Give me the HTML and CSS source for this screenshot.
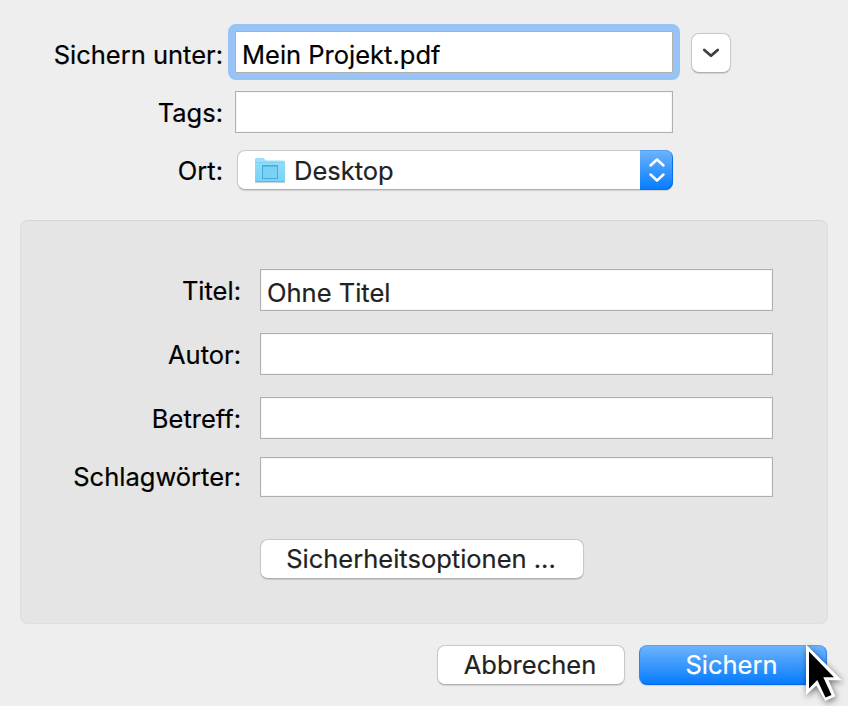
FILE: index.html
```html
<!DOCTYPE html>
<html lang="de">
<head>
    <meta charset="UTF-8">
    <meta name="viewport" content="width=device-width, initial-scale=1.0">

    <title>Sichern</title>

    <link rel="stylesheet" href="styles.css">
</head>
<body>

    <form class="dialog">
        <!-- File name, tags and location -->
        <div class="file-fields">
            <div class="row row-name">
                <label for="filename">Sichern unter:</label>
                <input id="filename" class="field focused" type="text" value="Mein Projekt.pdf">
                <button type="button" class="btn expand" aria-label="Erweitern">
                    <svg width="18" height="12" viewBox="0 0 18 12">
                        <path d="M2.3 3 L9 8.8 L15.7 3" fill="none" stroke="#404040" stroke-width="2.8" stroke-linecap="round" stroke-linejoin="round"/>
                    </svg>
                </button>
            </div>
            <div class="row row-tags">
                <label for="tags">Tags:</label>
                <input id="tags" class="field" type="text">
            </div>
            <div class="row row-place">
                <label>Ort:</label>
                <div class="select">
                    <svg class="folder" width="32" height="28" viewBox="0 0 32 28">
                        <defs>
                            <linearGradient id="folder-front" x1="0" y1="0" x2="0" y2="1">
                                <stop offset="0" stop-color="#8ddcfb"/>
                                <stop offset="1" stop-color="#78d2f9"/>
                            </linearGradient>
                        </defs>
                        <path d="M1 26.5 H31" stroke="#c9cfd2" stroke-width="1.2"/>
                        <path d="M1 24.5 V3.5 Q1 2 2.5 2 H9.5 L12 4.5 H29.5 Q31 4.5 31 6 V24.5 Z" fill="#9be0fb"/>
                        <path d="M1 7 H31 V24.5 Q31 25.8 30 25.8 H2 Q1 25.8 1 24.5 Z" fill="url(#folder-front)"/>
                        <path d="M1 6.5 H31" stroke="#83d0ef" stroke-width="1"/>
                        <path d="M1.5 25.5 H30.5" stroke="#5bbbe5" stroke-width="1"/>
                        <rect x="8.5" y="9.5" width="15" height="13" fill="#7ad1f5" stroke="#48acd9"/>
                        <path d="M8 9.8 H24" stroke="#48acd9" stroke-width="1.6"/>
                    </svg>
                    <span class="select-value">Desktop</span>
                    <span class="stepper">
                        <svg width="18" height="26" viewBox="0 0 18 26">
                            <path d="M2.5 8.5 L9 2.5 L15.5 8.5 M2.5 17.5 L9 23.5 L15.5 17.5" fill="none" stroke="#fff" stroke-width="2.5" stroke-linecap="round" stroke-linejoin="round"/>
                        </svg>
                    </span>
                </div>
            </div>
        </div>

        <!-- PDF metadata -->
        <div class="panel">
            <div class="row">
                <label for="title">Titel:</label>
                <input id="title" class="field" type="text" value="Ohne Titel">
            </div>
            <div class="row">
                <label for="author">Autor:</label>
                <input id="author" class="field" type="text">
            </div>
            <div class="row">
                <label for="subject">Betreff:</label>
                <input id="subject" class="field" type="text">
            </div>
            <div class="row row-keywords">
                <label for="keywords">Schlagwörter:</label>
                <input id="keywords" class="field" type="text">
            </div>
            <button type="button" class="btn security">Sicherheitsoptionen ...</button>
        </div>

        <div class="actions">
            <button type="button" class="btn cancel">Abbrechen</button>
            <button type="button" class="btn primary">Sichern</button>
        </div>

        <svg class="cursor" width="48" height="68" viewBox="0 0 48 68">
            <path d="M7 7.5 V58 L17.3 48.5 L26.3 64 L36.5 59.3 L29.5 43.3 H43 Z" fill="#fff"/>
            <path d="M10 14.5 V51.5 L18.3 43 L26.5 60.5 L32.5 58 L24.3 40.3 H35 Z" fill="#000"/>
        </svg>
    </form>

</body>
</html>
```

FILE: styles.css
```css
* {
    box-sizing: border-box;
}
body {
    margin: 0;
    background: #eeeeee;
    color: #000;
    font-family: Inter, "Liberation Sans", sans-serif;
    font-size: 25.5px;
    font-variant-ligatures: none;
    -webkit-text-stroke: 0.2px;
}
.dialog {
    position: relative;
    width: 848px;
    height: 706px;
    padding: 31px 20px 0;
    overflow: hidden;
}
.file-fields {
    height: 189px;
}
.row {
    display: flex;
    align-items: center;
}
label {
    flex: none;
    width: 203px;
    margin-right: 12px;
    padding-top: 2px;
    text-align: right;
    white-space: nowrap;
    line-height: 32px;
}
.field {
    width: 438px;
    height: 42px;
    margin: 0;
    padding: 5px 6px 0;
    border: 1px solid #b0b0b0;
    border-radius: 0;
    background: #fff;
    box-shadow: inset 0 0 0 1px #f5f5f5;
    color: #000;
    font: inherit;
    outline: none;
}
/* Focus ring around the active field */
.focused {
    box-shadow: 0 0 0 1px #98c4f5;
    outline: 7px solid #98c4f5;
    outline-offset: 0;
    border-radius: 1px;
}
.row-name {
    margin-bottom: 18px;
}
.row-name label {
    padding-top: 6px;
}
.row-tags {
    margin-bottom: 17px;
}
.btn {
    display: flex;
    align-items: center;
    justify-content: center;
    height: 40px;
    margin: 0;
    padding: 0 0 2px;
    border: 1px solid #c8c8c8;
    border-bottom-color: #b0b0b0;
    border-radius: 8px;
    background: #fff;
    box-shadow: 0 1px 1px rgba(0, 0, 0, 0.12);
    color: #222;
    font: inherit;
    white-space: nowrap;
}
.expand {
    width: 40px;
    margin: 2px 0 0 18px;
    padding: 0;
}
.select {
    display: flex;
    align-items: center;
    width: 436px;
    height: 40px;
    margin-left: 2px;
    padding-left: 16px;
    border: 1px solid #c8c8c8;
    border-bottom-color: #b0b0b0;
    border-right: 0;
    border-radius: 8px;
    box-shadow: 0 1px 1px rgba(0, 0, 0, 0.12);
    background: #fff;
    color: #222;
}
.select-value {
    margin-left: 8px;
}
.stepper {
    display: flex;
    align-items: center;
    justify-content: center;
    width: 33px;
    height: 40px;
    margin: -1px 0 -1px auto;
    border-radius: 0 8px 8px 0;
    background: linear-gradient(#6eb4fb, #047bff);
    box-shadow: inset 0 1px 0 #55a2f4, inset -1px -1px 0 #0a6df0;
}
.panel {
    width: 808px;
    height: 404px;
    padding: 48px 0 0;
    border: 1px solid #dedede;
    border-top-color: #d6d6d6;
    border-radius: 8px;
    background: #e5e5e5;
}
.panel label {
    width: 220px;
    margin-right: 19px;
}
.panel .field {
    width: 513px;
    color: #222;
}
.panel .row {
    margin-bottom: 22px;
}
.panel .row:nth-child(3) {
    margin-bottom: 18px;
}
.panel .row-keywords {
    margin-bottom: 42px;
}
.row-keywords label {
    padding-top: 0;
}
.row-keywords .field {
    height: 40px;
}
.security {
    width: 324px;
    margin-left: 239px;
    padding-right: 2px;
}
.actions {
    display: flex;
    justify-content: flex-end;
    gap: 14px;
    padding: 21px 1px 0 0;
}
.actions .btn {
    width: 188px;
}
.actions .cancel {
    padding-right: 2px;
}
.actions .primary {
    padding-right: 3px;
    border: 1px solid #2f86ee;
    border-top-color: #57a3f2;
    border-bottom-color: #0569e8;
    background: linear-gradient(#6db4fb, #057bff);
    color: #fff;
}
.cursor {
    position: absolute;
    left: 799px;
    top: 637px;
    filter: drop-shadow(1px 2px 3px rgba(0, 0, 0, 0.5));
}
```
